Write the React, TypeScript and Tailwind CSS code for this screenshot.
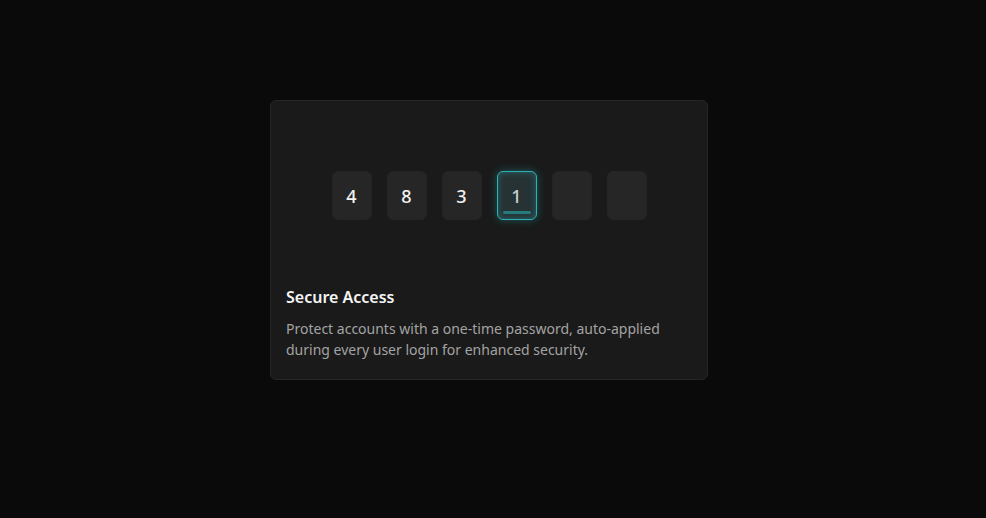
import React from "react";

const digits = ["4", "8", "3", "1", "", ""];
const activeIndex = 3;

const OtpSlot: React.FC<{ value: string; active: boolean }> = ({ value, active }) => {
  if (active) {
    return (
      <div className="relative flex h-[49px] w-10 items-center justify-center rounded-md border-[1.5px] border-[#2eb0b4] bg-[#263234] shadow-[0_0_8px_rgba(34,180,185,0.4),inset_0_0_7px_rgba(34,180,185,0.4)]">
        <span className="text-lg font-medium text-[#c9cfcf]">{value}</span>
        <div className="absolute bottom-[5px] left-[5px] right-[5px] h-[3px] rounded-full bg-[#267a7c]" />
      </div>
    );
  }
  return (
    <div className="flex h-[49px] w-10 items-center justify-center rounded-md border border-[#242424] bg-[#262626]">
      <span className="text-lg font-medium text-[#f2f2f2]">{value}</span>
    </div>
  );
};

export default function App() {
  return (
    <div
      className="flex h-[518px] w-full items-start justify-center bg-[#0a0a0a] pt-[100px] pr-2"
      style={{ fontFamily: '"Noto Sans", "Open Sans", sans-serif' }}
    >
      <div className="flex w-[438px] flex-col rounded-md border border-[#262626] bg-[#1a1a1a]">
        <div className="flex justify-center gap-[15px] pt-[70px] pb-[65px]">
          {digits.map((d, i) => (
            <OtpSlot key={i} value={d} active={i === activeIndex} />
          ))}
        </div>
        <div className="px-[15px] pb-[19px]">
          <h3 className="text-base leading-6 font-semibold text-[#f5f5f5]">Secure Access</h3>
          <p className="mt-[9px] text-sm leading-[21px] text-[#a3a3a3]">
            Protect accounts with a one-time password, auto-applied during every user login for enhanced security.
          </p>
        </div>
      </div>
    </div>
  );
}
